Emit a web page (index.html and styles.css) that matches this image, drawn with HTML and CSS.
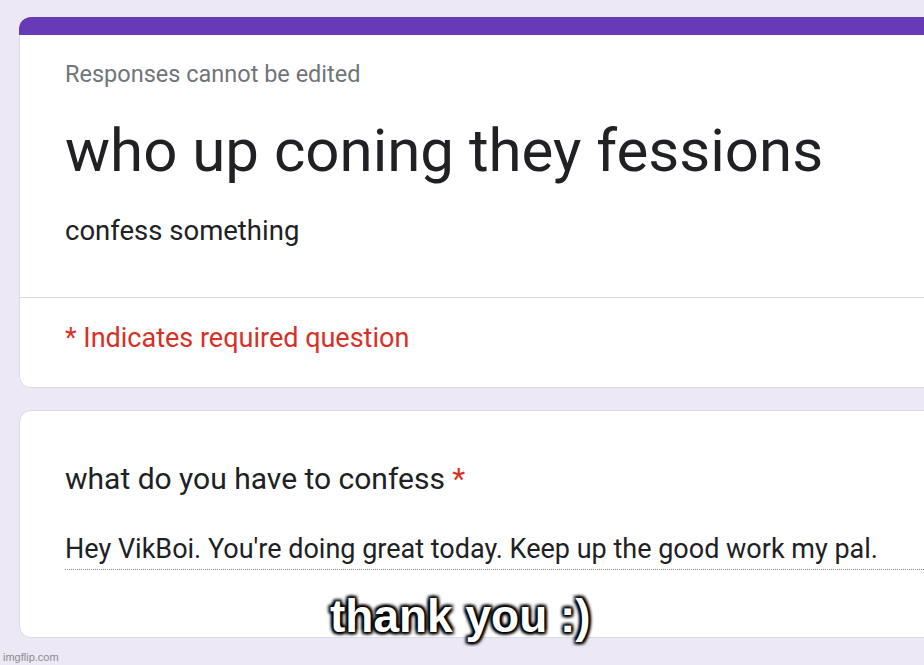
FILE: index.html
```html
<!DOCTYPE html>
<html lang="en">
<head>
    <meta charset="UTF-8">
    <title>who up coning they fessions</title>
    <link rel="stylesheet" href="styles.css">
</head>
<body>
    <div class="page">
        <div class="card">
            <div class="card-top"></div>
            <div class="card-body head">
                <div class="note">Responses cannot be edited</div>
                <h1 class="title">who up coning they fessions</h1>
                <div class="desc">confess something</div>
            </div>
            <div class="card-foot">
                <div class="required">* Indicates required question</div>
            </div>
        </div>
        <div class="card question">
            <div class="q-label">what do you have to confess <span class="star">*</span></div>
            <div class="answer">Hey VikBoi. You're doing great today. Keep up the good work my pal.</div>
        </div>
    </div>
    <div class="caption">thank you :)</div>
    <div class="watermark">imgflip.com</div>
</body>
</html>
```

FILE: styles.css
```css
body {
    margin: 0;
    background: #ece8f6;
    font-family: Roboto, "Noto Sans", sans-serif;
    color: #202124;
    width: 924px;
    height: 665px;
    overflow: hidden;
    position: relative;
}
.page {
    padding: 17px 0 0 19px;
}
.card {
    width: 1000px;
    background: #fff;
    border-radius: 12px;
}
.card-top {
    height: 18px;
    background: #673ab7;
    border-radius: 12px 12px 0 0;
}
.card-body,
.card-foot {
    border-left: 1px solid #dadce0;
    border-right: 1px solid #dadce0;
    padding-left: 45px;
}
.head {
    padding-top: 25px;
    padding-bottom: 49px;
    border-bottom: 1px solid #dadce0;
}
.note {
    font-size: 23.5px;
    line-height: 28px;
    color: #70757a;
}
.title {
    margin: 27px 0 0;
    font-size: 60px;
    line-height: 72px;
    font-weight: 400;
}
.desc {
    margin-top: 27px;
    font-size: 27.5px;
    line-height: 34px;
}
.card-foot {
    padding-top: 24px;
    padding-bottom: 33px;
    border-bottom: 1px solid #dadce0;
    border-radius: 0 0 12px 12px;
}
.required {
    font-size: 27px;
    line-height: 32px;
    color: #d93025;
}
.question {
    margin-top: 22px;
    border: 1px solid #dadce0;
    padding: 50px 0 67px 45px;
    box-sizing: border-box;
}
.q-label {
    font-size: 30px;
    line-height: 36px;
}
.star {
    color: #d93025;
}
.answer {
    margin-top: 36px;
    font-size: 27px;
    line-height: 32px;
    padding-bottom: 4px;
    border-bottom: 1px dotted #8a8d91;
}
.caption {
    position: absolute;
    left: 330px;
    top: 588px;
    font-family: "Liberation Sans", Arial, sans-serif;
    font-weight: 700;
    font-size: 46px;
    line-height: 56px;
    color: #fff;
    text-shadow: -2px -2px 3px #000, 2px -2px 3px #000, -2px 2px 3px #000, 2px 2px 3px #000, 0 0 5px #000;
}
.watermark {
    position: absolute;
    left: 3px;
    bottom: 2px;
    font-family: "Liberation Sans", Arial, sans-serif;
    font-size: 11px;
    color: #8c8c8c;
}
```
